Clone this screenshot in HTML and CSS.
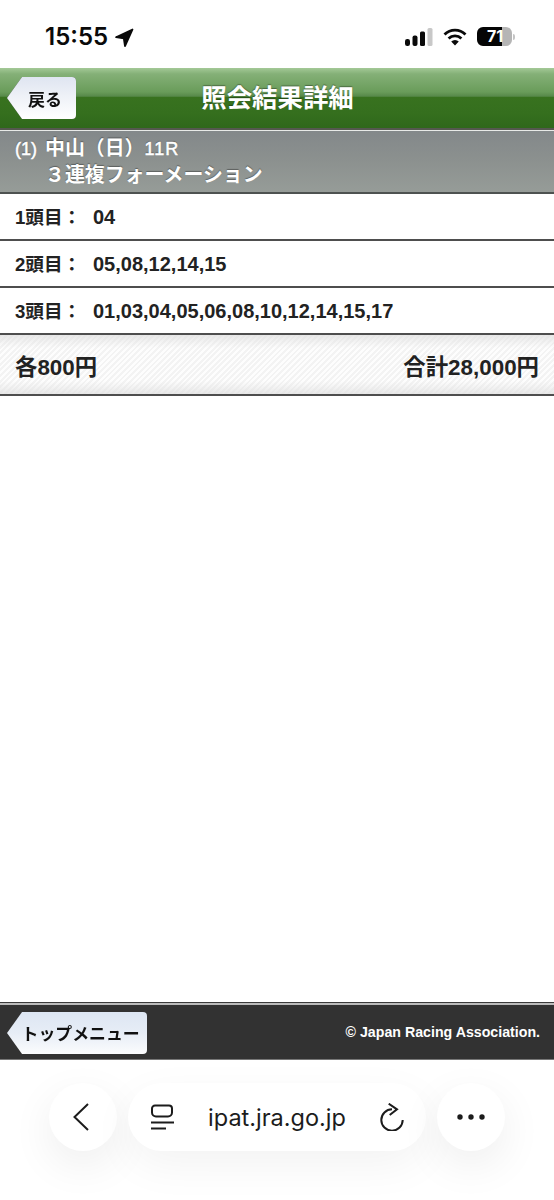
FILE: index.html
```html
<!DOCTYPE html>
<html lang="ja">
<head>
<meta charset="utf-8">
<title>照会結果詳細</title>
<link rel="stylesheet" href="styles.css">
</head>
<body>
<div class="page">
  <div class="status">
    <div class="status-left">
      <span class="time">15:55</span>
      <svg class="loc" viewBox="0 0 20 20" width="20" height="20"><path d="M18.5 1.5 2 9.2 9.8 10.4 11 18.2Z" fill="#0a0a0a" stroke="#0a0a0a" stroke-width="1.8" stroke-linejoin="round"/></svg>
    </div>
    <div class="status-right">
      <svg viewBox="0 0 28 18" width="28" height="18"><rect x="0" y="11" width="5" height="7" rx="2.2" fill="#0a0a0a"/><rect x="7.5" y="7.5" width="5" height="10.5" rx="2" fill="#0a0a0a"/><rect x="15" y="3.5" width="5" height="14.5" rx="1.5" fill="#0a0a0a"/><rect x="22.5" y="0" width="5" height="18" rx="1.5" fill="#c8c8c8"/></svg>
      <svg viewBox="0 0 24 18" width="24" height="18"><path d="M1.5 6.5a15 15 0 0 1 21 0" fill="none" stroke="#0a0a0a" stroke-width="2.8"/><path d="M5.6 10.4a9.2 9.2 0 0 1 12.8 0" fill="none" stroke="#0a0a0a" stroke-width="2.8"/><path d="M8.2 13.6 12 17.6l3.8-4a5.4 5.4 0 0 0-7.6 0Z" fill="#0a0a0a"/></svg>
      <div class="battery"><span class="battery-level">71</span><span class="battery-cap"></span></div>
    </div>
  </div>

  <header class="head">
    <div class="btn-wrap head-btn"><a class="btn btn-back">戻る</a></div>
    <h1 class="title">照会結果詳細</h1>
  </header>

  <section class="race">
    <div class="race-line"><span class="race-latin race-num">(1) </span>中山（日）<span class="race-latin race-no">11R</span></div>
    <div class="race-line race-type">３連複フォーメーション</div>
  </section>

  <main class="content">
    <div class="row"><span class="row-label">1頭目：</span><span class="row-value">04</span></div>
    <div class="row"><span class="row-label">2頭目：</span><span class="row-value">05,08,12,14,15</span></div>
    <div class="row"><span class="row-label">3頭目：</span><span class="row-value">01,03,04,05,06,08,10,12,14,15,17</span></div>
    <div class="summary"><span>各800円</span><span>合計28,000円</span></div>
  </main>

  <footer class="foot">
    <div class="btn-wrap"><a class="btn btn-top">トップメニュー</a></div>
    <span class="copy">© Japan Racing Association.</span>
  </footer>

  <nav class="browser">
    <div class="round">
      <svg viewBox="0 0 20 30" width="20" height="30"><path d="M15 2 1.5 15 15 28" fill="none" stroke="#1c1c1c" stroke-width="2"/></svg>
    </div>
    <div class="pill">
      <svg viewBox="0 0 24 26" width="24" height="26"><path d="M5 1.5h14a3 3 0 0 1 3 3v4a4 4 0 0 1-4 4H6a4 4 0 0 1-4-4v-4a3 3 0 0 1 3-3Z" fill="none" stroke="#1c1c1c" stroke-width="2"/><path d="M1 18.5h23M1 24.5h15" stroke="#1c1c1c" stroke-width="2" fill="none"/></svg>
      <span class="url">ipat.jra.go.jp</span>
      <svg viewBox="0 0 24 28" width="24" height="28"><path d="M12 6.3A10.7 10.7 0 1 0 22.7 17" fill="none" stroke="#1c1c1c" stroke-width="2"/><path d="M8.7 .7 17 6.3 9.7 12" fill="none" stroke="#1c1c1c" stroke-width="2"/></svg>
    </div>
    <div class="round">
      <svg viewBox="0 0 30 8" width="30" height="8"><circle cx="4" cy="4" r="2.7" fill="#1c1c1c"/><circle cx="15" cy="4" r="2.7" fill="#1c1c1c"/><circle cx="26" cy="4" r="2.7" fill="#1c1c1c"/></svg>
    </div>
  </nav>
</div>
</body>
</html>
```

FILE: styles.css
```css
* { box-sizing: border-box; }
html, body { margin: 0; padding: 0; background: #fff; }
body { font-family: "Liberation Sans", "Noto Sans CJK JP", sans-serif; color: #222; }
.page { width: 554px; height: 1200px; display: flex; flex-direction: column; overflow: hidden; }

.status { height: 68px; flex: none; display: flex; justify-content: space-between; align-items: flex-start; padding: 22px 22px 0 45px; }
.status-left { display: flex; align-items: center; gap: 6px; }
.time { font-family: Inter, sans-serif; font-size: 24px; font-weight: 600; line-height: 30px; color: #0a0a0a; }
.loc { margin-top: 1px; }
.status-right { display: flex; align-items: center; gap: 10px; padding-top: 5px; padding-right: 17px; }
.battery { display: flex; align-items: center; }
.battery-level { width: 35px; height: 19px; border-radius: 6px; font-family: Inter, sans-serif; font-size: 16px; font-weight: 700; line-height: 19px; padding-left: 10px; color: #fff; background: linear-gradient(90deg, #050505 0 71%, #b5b5b5 71% 100%); }
.battery-cap { width: 2px; height: 6px; margin-left: 1px; border-radius: 0 2px 2px 0; background: #c4c4c4; }

.head { height: 62px; flex: none; position: relative; display: flex; align-items: center; justify-content: center; border-bottom: 2px solid #55584f; background: linear-gradient(180deg, #a4c997 0, #84b077 10%, #699c5a 40%, #57894a 47%, #38721f 49%, #356f1e 75%, #2f681b 100%); }
.head-btn { position: absolute; left: 7px; top: 9px; }
.title { margin: 0 0 0 1px; font-size: 25.4px; font-weight: 700; line-height: 60px; color: #fff; text-shadow: 0 -1px 1px rgba(0,0,0,.35); }

.btn-wrap { filter: drop-shadow(0 0 .6px rgba(30,30,30,.8)); }
.btn { display: flex; align-items: center; font-weight: 700; font-size: 17px; color: #111; clip-path: polygon(15px 0, 100% 0, 100% 100%, 15px 100%, 0 50%); border-radius: 0 4px 4px 0; background: linear-gradient(180deg, #dfe5f1 0, #eef1f7 45%, #ffffff 100%); }
.btn-back { width: 69px; height: 42px; padding-left: 21px; }
.btn-top { width: 140px; height: 42px; padding: 0 0 2px 14.5px; font-size: 16.9px; background: linear-gradient(180deg, #dde6f3 0, #e7edf6 50%, #fbfcfd 100%); }

.race { height: 64px; flex: none; padding: 5px 15px 0; border-top: 1px solid #e8eae8; border-bottom: 2px solid #4d5250; background: linear-gradient(180deg, #83888a 0, #8c918f 50%, #969c98 100%); color: #fff; font-weight: 700; text-shadow: 0 -1px 1px rgba(0,0,0,.35); }
.race-line { font-size: 19.9px; line-height: 25.5px; }
.race-latin { font-size: 18px; font-weight: 400; -webkit-text-stroke: .5px #fff; }
.race-num { margin-right: 3px; }
.race-no { letter-spacing: 1px; }
.race-type { padding-left: 30px; }

.content { flex: 1; }
.row { height: 47px; display: flex; align-items: center; padding: 0 15px; border-bottom: 2px solid #4e4e4e; font-weight: 700; font-size: 20px; line-height: 26px; }
.row-label { width: 78px; font-size: 18.6px; padding-top: 3px; }
.row-value { padding-top: 1px; }
.summary { height: 61px; display: flex; justify-content: space-between; align-items: center; padding: 0 15px; border-bottom: 2px solid #4e4e4e; font-size: 22.4px; font-weight: 700; background: linear-gradient(180deg, rgba(225,225,225,.75) 0, rgba(255,255,255,0) 22%, rgba(255,255,255,0) 78%, rgba(225,225,225,.75) 100%), repeating-linear-gradient(135deg, #f3f3f3 0 2px, #fdfdfd 2px 4px); }

.foot { height: 58px; flex: none; display: flex; justify-content: space-between; align-items: center; padding: 4px 14px 0 7px; border-top: 1px solid #3a3a3a; border-bottom: 1px solid #777; background: #323232; box-shadow: inset 0 2px 0 #bbb; }
.copy { color: #fff; font-size: 14.2px; font-weight: 700; padding-bottom: 2px; }

.browser { flex: none; height: 140px; display: flex; justify-content: center; gap: 11px; padding-top: 23px; background: #fff; }
.round { width: 68px; height: 68px; border-radius: 50%; display: flex; align-items: center; justify-content: center; background: #fff; box-shadow: 0 14px 44px rgba(0,0,0,.07); }
.pill { width: 298px; height: 68px; border-radius: 34px; display: flex; align-items: center; justify-content: space-between; padding: 0 22px; background: #fff; box-shadow: 0 14px 44px rgba(0,0,0,.05); }
.url { font-family: Inter, sans-serif; font-size: 23.5px; color: #1c1c1c; }
```
